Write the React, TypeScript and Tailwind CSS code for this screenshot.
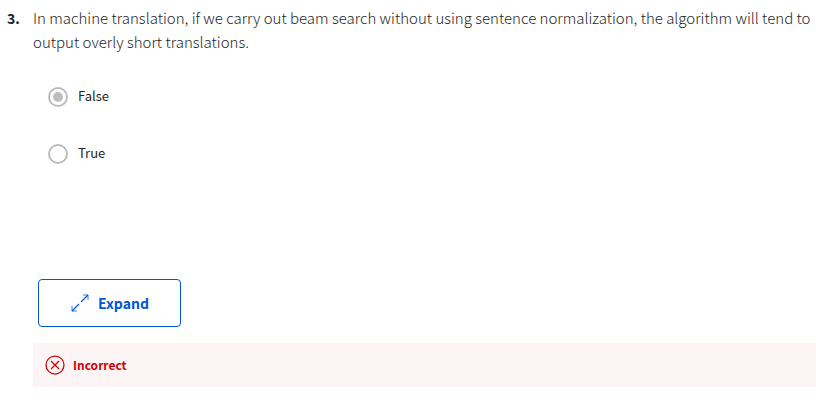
import { useState } from "react";

const options = ["False", "True"];

function Option({
  label,
  checked,
  onSelect,
}: {
  label: string;
  checked: boolean;
  onSelect: () => void;
}) {
  return (
    <label className="flex h-[57px] items-center gap-[10px] text-[13px] leading-5 text-[#1f1f1f]">
      <input
        type="radio"
        name="answer"
        value={label}
        checked={checked}
        onChange={onSelect}
        className="size-5 shrink-0 appearance-none rounded-full border-2 border-[#bdbdbd] bg-white bg-clip-content p-[3px] checked:bg-[#bdbdbd]"
      />
      <span className="pb-[2px]">{label}</span>
    </label>
  );
}

export default function App() {
  const [answer, setAnswer] = useState("False");

  return (
    <main className="bg-white pt-[6px] font-['Noto_Sans_CJK_SC',sans-serif]">
      <fieldset className="flex flex-col">
        <legend className="flex w-full pl-[7px] text-[15px] leading-6 text-[#1f1f1f]">
          <span className="w-[26px] shrink-0 text-sm leading-6 font-bold">3.</span>
          <span className="font-light">
            In machine translation, if we carry out beam search without using sentence
            normalization, the algorithm will tend to output overly short translations.
          </span>
        </legend>
        <div className="flex flex-col pt-[14px] pl-12">
          {options.map((option) => (
            <Option
              key={option}
              label={option}
              checked={answer === option}
              onSelect={() => setAnswer(option)}
            />
          ))}
        </div>
      </fieldset>

      <button
        type="button"
        className="mt-[97px] ml-[38px] flex h-12 w-[143px] items-center justify-center gap-2 rounded-[4px] border border-[#0056d2] text-sm font-bold text-[#0056d2]"
      >
        <svg
          width="20"
          height="20"
          viewBox="0 0 20 20"
          fill="none"
          stroke="currentColor"
          aria-hidden="true"
        >
          <path d="M13 2h5v5M2 13v5h5" strokeOpacity="0.8" />
          <path d="M18 2l-7 7M9 11l-7 7" strokeWidth="1.2" />
        </svg>
        Expand
      </button>

      <div
        role="status"
        className="mt-4 ml-[33px] flex h-11 items-center gap-2 bg-[#fdf5f5] pl-3 text-xs font-bold text-[#d30001]"
      >
        <svg
          width="20"
          height="20"
          viewBox="0 0 20 20"
          fill="none"
          stroke="currentColor"
          strokeWidth="1.25"
          aria-hidden="true"
        >
          <circle cx="10" cy="10" r="9" />
          <path d="M6 6l8 8M14 6l-8 8" />
        </svg>
        Incorrect
      </div>
    </main>
  );
}
